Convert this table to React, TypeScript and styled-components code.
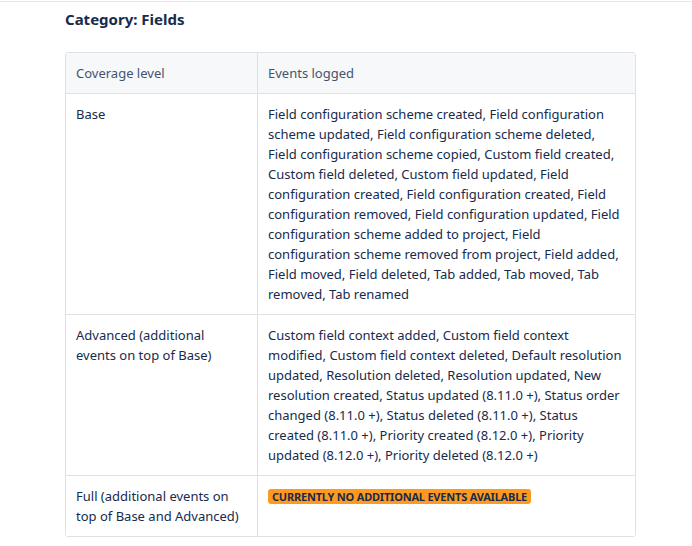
import React from "react";
import styled, { createGlobalStyle } from "styled-components";

const Global = createGlobalStyle`
  html, body { margin: 0; padding: 0; background: #ffffff; }
  body { font-family: "Noto Sans", "Open Sans", sans-serif; color: #172b4d; }
`;

const Page = styled.div`
  margin-top: 1px;
  border-top: 1px solid #e6e6e6;
  padding: 7px 56px 0 65px;
`;

const Heading = styled.h3`
  margin: 0 0 23px 0;
  font-size: 15px;
  line-height: 20px;
  font-weight: 700;
  color: #172b4d;
`;

const Table = styled.table`
  width: 571px;
  border-collapse: separate;
  border-spacing: 0;
  border: 1px solid #dfe1e6;
  border-radius: 3px;
  font-size: 13px;
  line-height: 20px;
`;

const Cell = styled.td<{ $head?: boolean; $first?: boolean; $last?: boolean }>`
  vertical-align: top;
  padding: 10px;
  background: ${(p) => (p.$head ? "#f7f8f9" : "#ffffff")};
  border-bottom: ${(p) => (p.$last ? "none" : "1px solid #dfe1e6")};
  border-right: ${(p) => (p.$first ? "1px solid #dfe1e6" : "none")};
  width: ${(p) => (p.$first ? "171px" : "auto")};
  color: ${(p) => (p.$head ? "#44546f" : "#172b4d")};
`;

const Badge = styled.span`
  display: inline-block;
  margin-top: 2px;
  background: #ff991f;
  color: #172b4d;
  font-size: 11px;
  line-height: 15px;
  font-weight: 700;
  letter-spacing: -0.2px;
  text-transform: uppercase;
  padding: 0 4px;
  border-radius: 3px;
`;

const rows = [
  {
    level: "Base",
    events:
      "Field configuration scheme created, Field configuration scheme updated, Field configuration scheme deleted, Field configuration scheme copied, Custom field created, Custom field deleted, Custom field updated, Field configuration created, Field configuration created, Field configuration removed, Field configuration updated, Field configuration scheme added to project, Field configuration scheme removed from project, Field added, Field moved, Field deleted, Tab added, Tab moved, Tab removed, Tab renamed",
  },
  {
    level: "Advanced (additional events on top of Base)",
    events:
      "Custom field context added, Custom field context modified, Custom field context deleted, Default resolution updated, Resolution deleted, Resolution updated, New resolution created, Status updated (8.11.0 +), Status order changed (8.11.0 +), Status deleted (8.11.0 +), Status created (8.11.0 +), Priority created (8.12.0 +), Priority updated (8.12.0 +), Priority deleted (8.12.0 +)",
  },
];

export default function App() {
  return (
    <>
      <Global />
      <Page>
        <Heading>Category: Fields</Heading>
        <Table>
          <tbody>
            <tr>
              <Cell $head $first>Coverage level</Cell>
              <Cell $head>Events logged</Cell>
            </tr>
            {rows.map((r) => (
              <tr key={r.level}>
                <Cell $first>{r.level}</Cell>
                <Cell>{r.events}</Cell>
              </tr>
            ))}
            <tr>
              <Cell $first $last>Full (additional events on top of Base and Advanced)</Cell>
              <Cell $last>
                <Badge>Currently no additional events available</Badge>
              </Cell>
            </tr>
          </tbody>
        </Table>
      </Page>
    </>
  );
}
